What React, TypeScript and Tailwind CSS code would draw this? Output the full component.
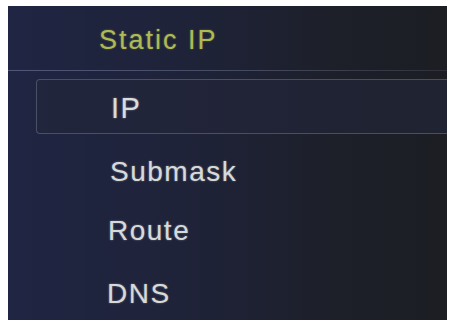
import React from 'react';

const items = [
  { label: 'Submask', pad: 'pl-[102px]', gap: 'mt-[24px]' },
  { label: 'Route', pad: 'pl-[100px]', gap: 'mt-[31px]' },
  { label: 'DNS', pad: 'pl-[99px]', gap: 'mt-[35px]' },
];

const font = { fontFamily: '"Liberation Sans", Arial, sans-serif' };

const App: React.FC = () => {
  return (
    <div className="w-[451px] h-[323px] bg-white pt-[6px] pl-[8px] overflow-hidden" style={font}>
      <div className="relative w-[439px] h-[314px] bg-[linear-gradient(90deg,#1f2543_0%,#1f2339_40%,#1d1f29_75%,#1c1e24_100%)] overflow-hidden">
        {/* Title */}
        <div className="pt-[19px] pl-[91px]">
          <h1 className="text-[27px] leading-[30px] tracking-[2px] text-[#aebb55] [text-shadow:0_0_2px_rgba(174,187,85,0.5)]">
            Static IP
          </h1>
        </div>
        <div className="mt-[15px] h-px w-full bg-[linear-gradient(90deg,rgba(140,150,185,0.45)_0%,rgba(140,150,185,0.35)_55%,rgba(120,128,150,0.2)_100%)]" />

        {/* Selected row */}
        <div className="mt-[8px] ml-[28px] h-[55px] rounded-l-[4px] border border-r-0 border-[#5c6378]/70 bg-[#23273a]/60 pt-[14px] pl-[74px]">
          <span className="block text-[29px] leading-[29px] tracking-[1.5px] text-[#d9dddd] [text-shadow:0_0_2px_rgba(220,225,225,0.5)]">
            IP
          </span>
        </div>

        {/* Other rows */}
        {items.map((item) => (
          <div key={item.label} className={`${item.gap} ${item.pad}`}>
            <span className="block text-[28px] leading-[28px] tracking-[1.5px] text-[#d6dada] [text-shadow:0_0_2px_rgba(214,218,218,0.5)]">
              {item.label}
            </span>
          </div>
        ))}
      </div>
    </div>
  );
};

export default App;
